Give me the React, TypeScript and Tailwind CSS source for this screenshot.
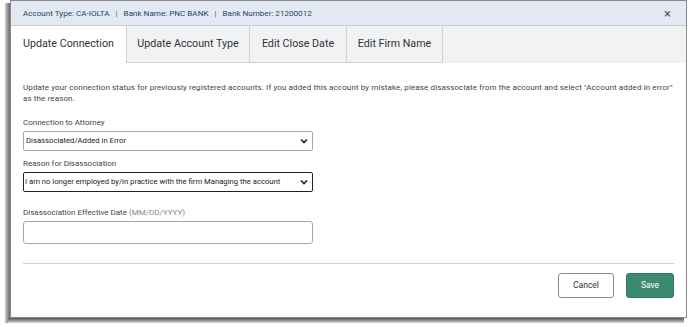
import React from "react";

function Chevron() {
  return (
    <svg width="8" height="6" viewBox="0 0 8 6" className="shrink-0">
      <path d="M1 1.5 L4 4.5 L7 1.5" fill="none" stroke="#222" strokeWidth="1.6" />
    </svg>
  );
}

export default function App() {
  const font = { fontFamily: "Roboto, 'Noto Sans', sans-serif" };
  return (
    <div className="w-[688px] h-[327px] bg-white relative overflow-hidden" style={font}>
      <div className="absolute left-[20px] top-[316px] w-[640px] h-[6px] bg-[#dcdcdc]" />
      <div className="absolute left-[5px] top-[3px] w-[6px] h-[320px] bg-gradient-to-r from-[#d0d0d0] to-[#555]" />
      <div className="absolute left-[8px] top-[318px] w-[676px] h-[5px] bg-gradient-to-b from-[#555] to-[#d8d8d8]" />
      <div className="relative ml-[10px] w-[677px] h-[318px] bg-white border border-[#8a8a8a] flex flex-col">
        {/* header */}
        <div className="h-[25px] bg-[#e2e9f3] border-b border-[#c9cdd3] flex items-center pl-[12px] pr-[12px] text-[8.1px] text-[#2b4462]">
          <span>Account Type: CA-IOLTA</span>
          <span className="mx-[6px] text-[#3a5a80]">|</span>
          <span>Bank Name: PNC BANK</span>
          <span className="mx-[6px] text-[#3a5a80]">|</span>
          <span>Bank Number: 21200012</span>
          <span className="ml-auto text-[#555] text-[13px] leading-none mr-[3px]">×</span>
        </div>
        {/* tabs */}
        <div className="h-[37px] bg-[#f1f2f4] flex text-[10.7px] text-[#333]">
          <div className="w-[115px] bg-white flex items-center justify-center">Update Connection</div>
          <div className="w-[124px] border-l border-r border-b border-[#cfd2d6] flex items-center justify-center">Update Account Type</div>
          <div className="w-[97px] border-r border-b border-[#cfd2d6] flex items-center justify-center">Edit Close Date</div>
          <div className="w-[96px] border-r border-b border-[#cfd2d6] flex items-center justify-center">Edit Firm Name</div>
        </div>
        {/* body */}
        <div className="px-[12px] pt-[19px] flex-1 flex flex-col">
          <p className="text-[8px] leading-[11px] text-[#444] tracking-[0.12px]">
            Update your connection status for previously registered accounts. If you added this account by mistake, please disassociate from the account and select "Account added in error" as the reason.
          </p>
          <div className="mt-[13px] text-[8px] text-[#444] leading-[11px]">Connection to Attorney</div>
          <div className="mt-[3px] w-[290px] h-[20px] border border-[#a8a8a8] rounded-[2px] flex items-center pl-[2px] pr-[4px] text-[7.7px] text-[#222]">
            <span className="flex-1 whitespace-nowrap">Disassociated/Added in Error</span>
            <Chevron />
          </div>
          <div className="mt-[7px] text-[8px] text-[#444] leading-[11px]">Reason for Disassociation</div>
          <div className="mt-[3px] w-[290px] h-[20px] border border-[#222] rounded-[2px] flex items-center pl-[1px] pr-[4px] text-[7.7px] text-[#222]">
            <span className="flex-1 whitespace-nowrap">I am no longer employed by/in practice with the firm Managing the account</span>
            <Chevron />
          </div>
          <div className="mt-[15px] text-[8px] text-[#444] leading-[11px]">
            Disassociation Effective Date <span className="text-[#888]">(MM/DD/YYYY)</span>
          </div>
          <div className="mt-[3px] w-[290px] h-[23px] border border-[#a8a8a8] rounded-[3px]" />
          <div className="mt-[19px] h-px bg-[#d0d0d0] w-full" />
          <div className="mt-[9px] flex justify-end gap-[12px]">
            <button className="w-[56px] h-[25px] border border-[#8a8a8a] rounded-[3px] bg-white text-[8.5px] text-[#333]">Cancel</button>
            <button className="w-[48px] h-[25px] rounded-[3px] bg-[#3b8a6f] border border-[#2f7a5f] text-[8.5px] text-white">Save</button>
          </div>
        </div>
      </div>
    </div>
  );
}
